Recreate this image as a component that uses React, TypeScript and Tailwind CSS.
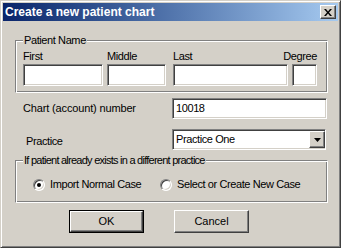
import React from "react";

const font = "font-['Liberation_Sans',Arial,sans-serif]";

// classic 3D edges
const sunken =
  "border border-t-[#808080] border-l-[#808080] border-b-white border-r-white shadow-[inset_1px_1px_0_#404040,inset_-1px_-1px_0_#d4d0c8]";
const raised =
  "border border-t-white border-l-white border-b-[#404040] border-r-[#404040] shadow-[inset_-1px_-1px_0_#808080]";
const etched =
  "border border-t-[#808080] border-l-[#808080] border-b-white border-r-white shadow-[inset_1px_1px_0_#fff,inset_-1px_-1px_0_#808080]";

function TextBox({ w, h, value = "" }: { w: string; h: string; value?: string }) {
  return (
    <div className={`${sunken} ${w} ${h} bg-white flex items-center px-[3px] text-[11px] tracking-[-0.4px] text-black`}>
      {value}
    </div>
  );
}

function Radio({ checked, label, w }: { checked?: boolean; label: string; w: string }) {
  return (
    <div className={`flex items-center gap-[5px] ${w}`}>
      <span className="w-[12px] h-[12px] rounded-full bg-white border border-t-[#808080] border-l-[#808080] border-b-white border-r-white shadow-[inset_1px_1px_0_#404040,inset_-1px_-1px_0_#d4d0c8] flex items-center justify-center">
        {checked && <span className="w-[4px] h-[4px] rounded-full bg-black" />}
      </span>
      <span className="leading-[13px]">{label}</span>
    </div>
  );
}

export default function App() {
  return (
    <div className={`${font} w-[341px] h-[248px] bg-[#d4d0c8] text-black text-[11px] tracking-[-0.4px] border border-t-[#d4d0c8] border-l-[#d4d0c8] border-b-[#404040] border-r-[#404040] shadow-[inset_1px_1px_0_#fff,inset_-1px_-1px_0_#808080] p-[2px] flex flex-col`}>
      {/* Title bar */}
      <div className="h-[18px] flex items-center justify-between pl-[2px] pr-[2px] bg-gradient-to-r from-[#0a246a] to-[#a6caf0]">
        <span className="text-white font-bold text-[12px] tracking-normal leading-[18px]">Create a new patient chart</span>
        <button className={`${raised} w-[16px] h-[14px] bg-[#d4d0c8] flex items-center justify-center`}>
          <svg width="8" height="7" viewBox="0 0 8 7">
            <path d="M0 0h2l2 2.5L6 0h2L5 3.5 8 7H6L4 4.5 2 7H0l3-3.5z" fill="#000" />
          </svg>
        </button>
      </div>

      <div className="flex flex-col pl-[12px] pr-[10px]">
        {/* Patient Name */}
        <div className={`${etched} mt-[19px] flex flex-col pl-[7px] pr-[10px] pb-[6px]`}>
          <span className="-mt-[7px] px-[1px] self-start bg-[#d4d0c8] leading-[13px]">Patient Name</span>
          <div className="flex mt-[3px]">
            <div className="flex flex-col gap-[1px] w-[80px]">
              <span className="leading-[13px]">First</span>
              <TextBox w="w-[80px]" h="h-[22px]" />
            </div>
            <div className="flex flex-col gap-[1px] w-[59px] ml-[4px]">
              <span className="leading-[13px]">Middle</span>
              <TextBox w="w-[59px]" h="h-[22px]" />
            </div>
            <div className="flex flex-col gap-[1px] w-[115px] ml-[7px]">
              <span className="leading-[13px]">Last</span>
              <TextBox w="w-[115px]" h="h-[22px]" />
            </div>
            <div className="flex flex-col items-end gap-[1px] w-[25px] ml-[4px]">
              <span className="leading-[13px] whitespace-nowrap">Degree</span>
              <TextBox w="w-[25px]" h="h-[22px]" />
            </div>
          </div>
        </div>

        {/* Chart number */}
        <div className="flex items-center mt-[5px] pr-[1px]">
          <span className="flex-1 pl-[8px] tracking-[-0.15px]">Chart (account) number</span>
          <TextBox w="w-[155px]" h="h-[21px]" value="10018" />
        </div>

        {/* Practice */}
        <div className="flex items-center mt-[10px] pr-[2px]">
          <span className="flex-1 pl-[11px] pt-[3px]">Practice</span>
          <div className={`${sunken} w-[154px] h-[21px] bg-white flex items-center`}>
            <span className="flex-1 pl-[3px]">Practice One</span>
            <div className={`${raised} w-[16px] h-[17px] bg-[#d4d0c8] flex items-center justify-center`}>
              <svg width="7" height="4" viewBox="0 0 7 4">
                <path d="M0 0h7L3.5 4z" fill="#000" />
              </svg>
            </div>
          </div>
        </div>

        {/* Existing patient */}
        <div className={`${etched} mt-[10px] flex flex-col pl-[17px] pb-[11px]`}>
          <span className="-mt-[7px] -ml-[10px] px-[1px] self-start bg-[#d4d0c8] leading-[13px] tracking-[-0.75px]">
            If patient already exists in a different practice
          </span>
          <div className="flex mt-[11px]">
            <Radio checked label="Import Normal Case" w="w-[127px]" />
            <Radio label="Select or Create New Case" w="w-auto" />
          </div>
        </div>

        {/* Buttons */}
        <div className="flex mt-[7px] ml-[54px] gap-[30px]">
          <div className="border border-black">
            <button className={`${raised} w-[73px] h-[21px] bg-[#d4d0c8] text-[11px] tracking-normal`}>OK</button>
          </div>
          <button className={`${raised} w-[75px] h-[23px] bg-[#d4d0c8] text-[11px] tracking-normal`}>Cancel</button>
        </div>
      </div>
    </div>
  );
}
